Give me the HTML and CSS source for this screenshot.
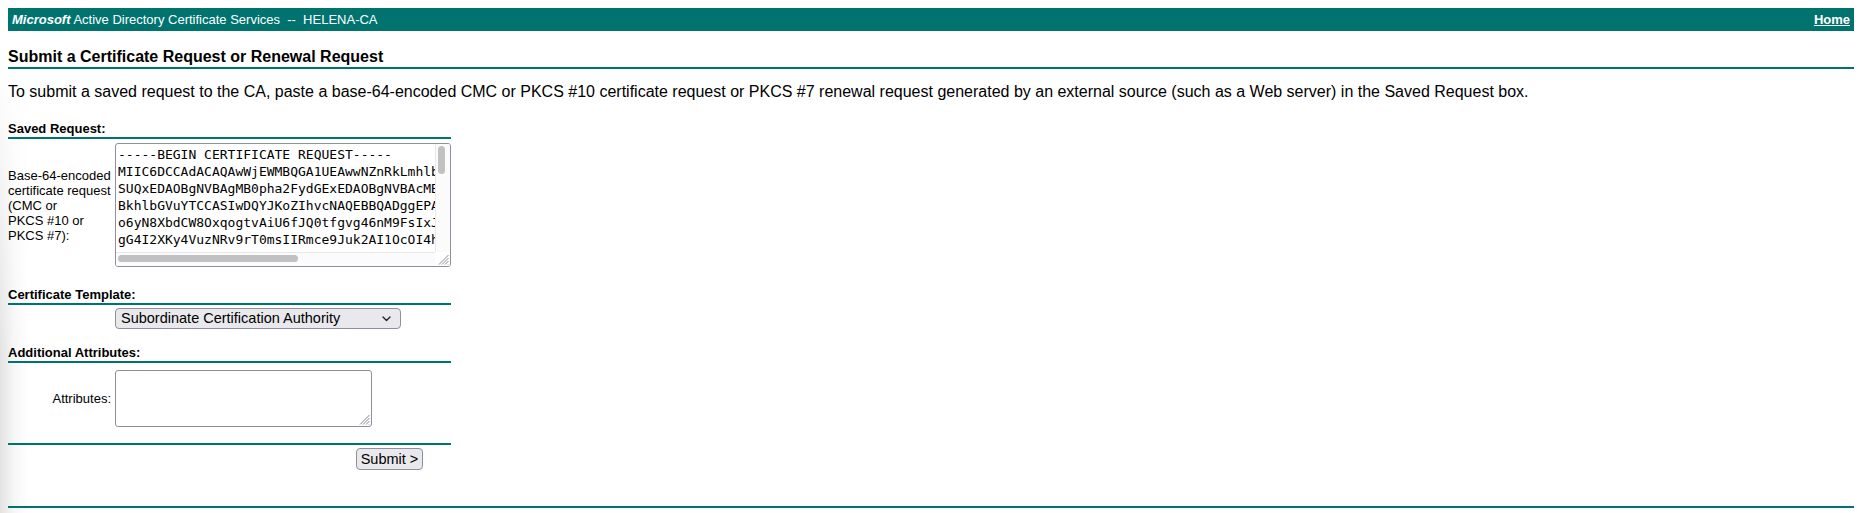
FILE: index.html
```html
<!DOCTYPE html>
<html lang="en">
<head>
<meta charset="utf-8">
<title>Microsoft Active Directory Certificate Services</title>
<link rel="stylesheet" href="styles.css">
</head>
<body>
<div class="topbar">
  <span class="topbar-title"><b><i>Microsoft</i></b> Active Directory Certificate Services &nbsp;--&nbsp; HELENA-CA</span>
  <a class="topbar-home" href="#">Home</a>
</div>
<div class="page-title">Submit a Certificate Request or Renewal Request</div>
<p class="intro">To submit a saved request to the CA, paste a base-64-encoded CMC or PKCS #10 certificate request or PKCS #7 renewal request generated by an external source (such as a Web server) in the Saved Request box.</p>
<form class="req-form">
  <div class="section-head head-saved">Saved Request:</div>
  <div class="row row-saved">
    <div class="label">Base-64-encoded<br>certificate request<br>(CMC or<br>PKCS #10 or<br>PKCS #7):</div>
    <div class="box-wrap saved-wrap">
      <textarea class="saved-box" wrap="off" spellcheck="false">-----BEGIN CERTIFICATE REQUEST-----
MIIC6DCCAdACAQAwWjEWMBQGA1UEAwwNZnRkLmhlbGVuYS5jYTELMAkGA1UEBhMC
SUQxEDAOBgNVBAgMB0pha2FydGExEDAOBgNVBAcMB0pha2FydGExDzANBgNVBAoM
BkhlbGVuYTCCASIwDQYJKoZIhvcNAQEBBQADggEPADCCAQoCggEBAL2mS9dQf3kE
o6yN8XbdCW8OxqogtvAiU6fJQ0tfgvg46nM9FsIxJ7pQeWk3VbR2tYmH8cL0aN4s
gG4I2XKy4VuzNRv9rT0msIIRmce9Juk2AI1OcOI4hW5pZsT3qLm7dVx8bK2nRf0Y
Qm3xVt6Lp9sD1hWkE8aZrN4yB7cF2uJqG5oT0vXiM3eK9dHs6lPwA1bC4nRgU8fy
tZ7yL2wQe5XkP0mNv3sH9aR1cD4jB6uG8fT2oY5iK7eW3lQ9xZ0nM1vC4bS6hJ8d
-----END CERTIFICATE REQUEST-----</textarea>
      <div class="vscroll"><div class="vthumb"></div></div>
      <div class="hscroll"><div class="hthumb"></div></div>
      <div class="scroll-corner">
        <svg class="grip" width="11" height="11" viewBox="0 0 11 11" aria-hidden="true"><path d="M10.5 1 L1 10.5 M10.5 4 L4 10.5 M10.5 7 L7 10.5 M10.5 10 L10 10.5" stroke="#8a8a8a" stroke-width="1" fill="none"/></svg>
      </div>
    </div>
  </div>
  <div class="section-head head-template">Certificate Template:</div>
  <div class="row row-template">
    <div class="label"></div>
    <span class="select-wrap">
      <select class="template-select">
        <option selected>Subordinate Certification Authority</option>
        <option>Web Server</option>
        <option>User</option>
      </select>
      <svg class="select-chevron" width="9" height="6" viewBox="0 0 9 6" aria-hidden="true"><path d="M1 1 L4.5 4.5 L8 1" fill="none" stroke="#222" stroke-width="1.4" stroke-linecap="round" stroke-linejoin="round"/></svg>
    </span>
  </div>
  <div class="section-head head-attr">Additional Attributes:</div>
  <div class="row row-attr">
    <div class="label label-right">Attributes:</div>
    <div class="box-wrap attr-wrap">
      <textarea class="attr-box" spellcheck="false"></textarea>
      <svg class="grip attr-grip" width="11" height="11" viewBox="0 0 11 11" aria-hidden="true"><path d="M10.5 1 L1 10.5 M10.5 4 L4 10.5 M10.5 7 L7 10.5 M10.5 10 L10 10.5" stroke="#8a8a8a" stroke-width="1" fill="none"/></svg>
    </div>
  </div>
  <div class="submit-row">
    <button type="button" class="submit-btn">Submit &gt;</button>
  </div>
</form>
<div class="bottom-rule"></div>
</body>
</html>
```
FILE: styles.css
```css
html {
  background:
    linear-gradient(to bottom, #ffffff 60px, rgba(255,255,255,0) 360px),
    linear-gradient(to right, #e3e3e3 0, #f6f6f6 14px, #ffffff 28px);
  min-height: 100%;
}

body {
  margin: 8px;
  font-family: "Liberation Sans", Arial, Helvetica, sans-serif;
  color: #000;
}

.topbar {
  height: 23px;
  background: #00736f;
  color: #fff;
  font-size: 13px;
  line-height: 15px;
  display: flex;
  align-items: center;
  justify-content: space-between;
  padding: 0 4px 0 4px;
}

.topbar-home {
  color: #fff;
  font-weight: bold;
  text-decoration: underline;
}

.page-title {
  margin-top: 17px;
  font-size: 16px;
  font-weight: bold;
  line-height: 18px;
  padding-bottom: 1px;
  border-bottom: 2px solid #00736f;
}

.intro {
  margin: 14px 0 0 0;
  font-size: 16px;
  line-height: 18px;
}

.req-form {
  width: 443px;
  margin: 0;
}

.section-head {
  font-size: 13px;
  font-weight: bold;
  line-height: 15px;
  padding-bottom: 1px;
  border-bottom: 2px solid #00736f;
}

.head-saved { margin-top: 20px; }
.head-template { margin-top: 20px; }
.head-attr { margin-top: 16px; }

.row {
  display: grid;
  grid-template-columns: 107px auto;
  align-items: center;
  justify-content: start;
}

.row-saved { margin-top: 4px; }
.row-template { margin-top: 3px; }
.row-attr { margin-top: 7px; }

.label {
  font-size: 13px;
  line-height: 15px;
  white-space: nowrap;
  padding-right: 4px;
}

.label-right {
  text-align: right;
}

.box-wrap {
  position: relative;
}

.saved-wrap {
  width: 336px;
  height: 124px;
}

.attr-wrap {
  width: 257px;
  height: 57px;
}

.saved-box,
.attr-box {
  box-sizing: border-box;
  margin: 0;
  border: 1px solid #8f8f9d;
  border-radius: 3px;
  background: #fff;
  outline: none;
  display: block;
  resize: none;
  overflow: hidden;
}

.saved-box {
  width: 336px;
  height: 124px;
  padding: 2px 2px;
  font-family: "DejaVu Sans Mono", "Liberation Mono", monospace;
  font-size: 13px;
  line-height: 17px;
  white-space: pre;
  color: #000;
}

.attr-box {
  width: 257px;
  height: 57px;
  padding: 2px;
  font-family: "DejaVu Sans Mono", monospace;
  font-size: 13px;
}

.vscroll {
  position: absolute;
  top: 1px;
  right: 1px;
  bottom: 15px;
  width: 15px;
  box-sizing: border-box;
  background: #fbfbfb;
  border-left: 1px solid #e8e8e8;
  border-radius: 0 2px 0 0;
}

.vthumb {
  margin: 2px 0 0 2px;
  width: 7px;
  height: 28px;
  border-radius: 4px;
  background: #c1c1c1;
}

.hscroll {
  position: absolute;
  left: 1px;
  right: 16px;
  bottom: 1px;
  height: 17px;
  box-sizing: border-box;
  background: linear-gradient(to bottom, #ffffff 0, #ffffff 3px, #e8e8e8 3px, #e8e8e8 4px, #fbfbfb 4px);
  border-radius: 0 0 0 2px;
  padding-top: 6px;
}

.hthumb {
  margin-left: 2px;
  width: 180px;
  height: 7px;
  border-radius: 4px;
  background: #c1c1c1;
}

.scroll-corner {
  position: absolute;
  right: 1px;
  bottom: 1px;
  width: 15px;
  height: 14px;
  background: #fff;
  border-radius: 0 0 2px 0;
}

.grip {
  position: absolute;
  right: 1px;
  bottom: 1px;
  display: block;
}

.attr-grip {
  right: 2px;
  bottom: 2px;
}

.select-wrap {
  position: relative;
  display: inline-block;
  width: 286px;
  height: 21px;
}

.template-select {
  -webkit-appearance: none;
  appearance: none;
  box-sizing: border-box;
  width: 286px;
  height: 21px;
  margin: 0;
  padding: 0 20px 0 5px;
  border: 1px solid #8f8f9d;
  border-radius: 4px;
  background: #e9e9ed;
  color: #000;
  font-family: "Liberation Sans", Arial, sans-serif;
  font-size: 14.5px;
  line-height: 19px;
  outline: none;
}

.select-chevron {
  position: absolute;
  right: 10px;
  top: 8px;
  pointer-events: none;
}

.submit-row {
  margin-top: 16px;
  border-top: 2px solid #00736f;
  padding-top: 3px;
  padding-right: 28px;
  display: flex;
  justify-content: flex-end;
}

.submit-btn {
  box-sizing: border-box;
  width: 67px;
  height: 22px;
  margin: 0;
  padding: 0;
  border: 1px solid #8f8f9d;
  border-radius: 4px;
  background: #e9e9ed;
  color: #000;
  font-family: "Liberation Sans", Arial, sans-serif;
  font-size: 14.5px;
  line-height: 20px;
  white-space: nowrap;
  text-align: center;
}

.bottom-rule {
  margin-top: 36px;
  height: 2px;
  background: #00736f;
}
```
